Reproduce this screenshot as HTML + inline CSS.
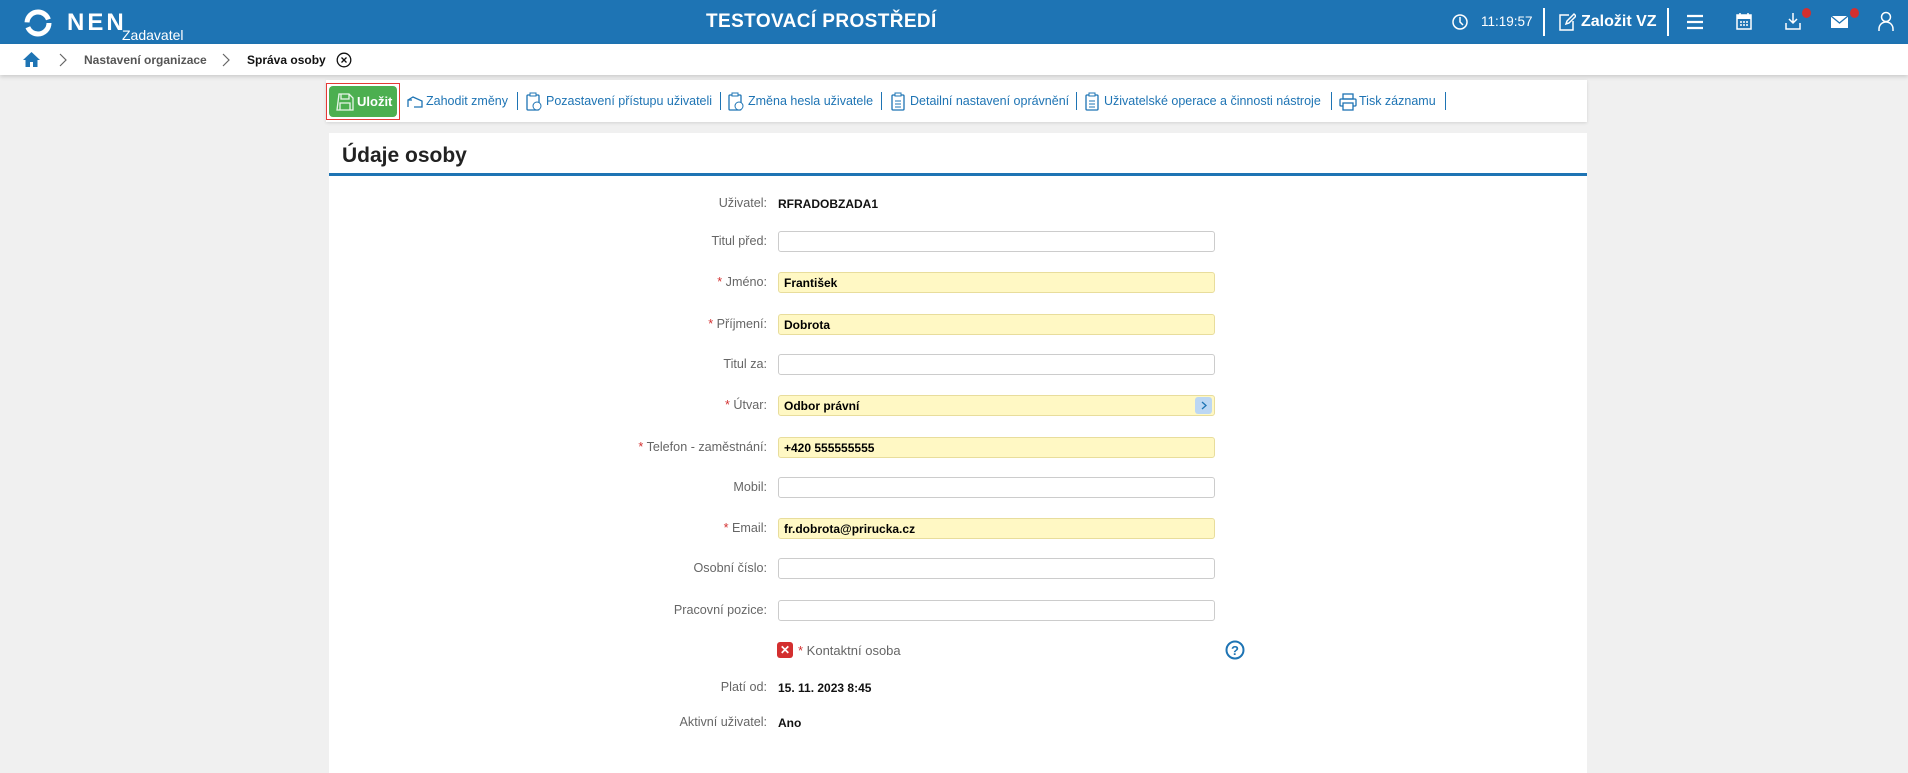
<!DOCTYPE html>
<html><head><meta charset="utf-8"><style>
*{box-sizing:border-box;margin:0;padding:0}
body{width:1908px;height:749px;overflow:hidden;background:#f0f0f0;font-family:"Liberation Sans",sans-serif;position:relative}
.a{position:absolute;white-space:nowrap}
#hdr{position:absolute;left:0;top:0;width:1908px;height:44px;background:#1e74b4}
#bc{position:absolute;left:0;top:44px;width:1908px;height:31px;background:#fff;box-shadow:0 2px 4px rgba(0,0,0,.15)}
#tb{position:absolute;left:326px;top:80px;width:1261px;height:42px;background:#fff;box-shadow:0 1px 3px rgba(0,0,0,.12)}
#card{position:absolute;left:329px;top:133px;width:1258px;height:640px;background:#fff}
.tl{color:#1e74b4;font-size:12.5px;top:94px}
.sep{position:absolute;top:92px;width:1px;height:18px;background:#1e74b4}
.lb{color:#666;font-size:12.6px;text-align:right;right:1141px}
.lb i{color:#d32f2f;font-style:normal}
.in{position:absolute;left:778px;width:437px;height:21px;border:1px solid #ccc;border-radius:3px;background:#fff;font-size:12px;font-weight:bold;padding:3px 5px;color:#000}
.y{background:#fff8c4;border-color:#e8dd9c}
.v{left:778px;font-size:12px;font-weight:bold;color:#111}
</style></head><body>
<div id="hdr"></div>
<svg class="a" style="left:24px;top:9px" width="28" height="28" viewBox="0 0 28 28"><circle cx="14" cy="14" r="11" fill="none" stroke="#fff" stroke-width="5" stroke-dasharray="30 5"/></svg>
<div class="a" style="left:67px;top:9px;color:#fff;font-size:24px;font-weight:bold;letter-spacing:3px">NEN</div>
<div class="a" style="left:122px;top:27px;color:#fff;font-size:14px">Zadavatel</div>
<div class="a" style="left:706px;top:11px;color:#fff;font-size:19px;font-weight:bold;letter-spacing:.4px">TESTOVACÍ PROSTŘEDÍ</div>
<svg class="a" style="left:1451px;top:13px" width="18" height="18"><circle cx="9" cy="9" r="7" fill="none" stroke="#fff" stroke-width="1.5"/><path d="M9 4v5l3 3" stroke="#fff" stroke-width="1.5" fill="none"/></svg>
<div class="a" style="left:1481px;top:14px;color:#fff;font-size:13.5px">11:19:57</div>
<div class="a" style="left:1543px;top:8px;width:2px;height:28px;background:#fff"></div>
<svg class="a" style="left:1558px;top:12px" width="18" height="20"><path d="M11 3H2v15h13V9M8 12l1-3 7-7 2 2-7 7z" stroke="#fff" stroke-width="1.5" fill="none"/></svg>
<div class="a" style="left:1581px;top:13px;color:#fff;font-size:16px;font-weight:bold">Založit VZ</div>
<div class="a" style="left:1667px;top:8px;width:2px;height:28px;background:#fff"></div>
<svg class="a" style="left:1687px;top:14px" width="16" height="16"><path d="M0 2h16M0 8h16M0 14h16" stroke="#fff" stroke-width="2.2"/></svg>
<svg class="a" style="left:1736px;top:12px" width="16" height="18"><rect x="1" y="3" width="14" height="14" fill="none" stroke="#fff" stroke-width="1.5"/><rect x="1" y="3" width="14" height="4" fill="#fff"/><path d="M4 1v4M12 1v4M4 10h2M7 10h2M10 10h2M4 13h2M7 13h2M10 13h2" stroke="#fff" stroke-width="1.5"/></svg>
<svg class="a" style="left:1784px;top:12px" width="18" height="18"><path d="M9 1v9M5 7l4 4 4-4M2 11v6h14v-6" stroke="#fff" stroke-width="1.5" fill="none"/></svg>
<div class="a" style="left:1802px;top:8px;width:9px;height:10px;border-radius:50%;background:#d32f2f"></div>
<svg class="a" style="left:1830px;top:15px" width="19" height="14"><rect x="1" y="1" width="17" height="12" fill="#fff"/><path d="M1 1l8.5 7 8.5-7" stroke="#1e74b4" stroke-width="1.3" fill="none"/></svg>
<div class="a" style="left:1850px;top:8px;width:9px;height:10px;border-radius:50%;background:#d32f2f"></div>
<svg class="a" style="left:1878px;top:11px" width="16" height="20"><circle cx="8" cy="6" r="4.5" fill="none" stroke="#fff" stroke-width="1.5"/><path d="M1 20v-2c0-4 3-7 7-7s7 3 7 7v2" fill="none" stroke="#fff" stroke-width="1.5"/></svg>

<div id="bc"></div>
<svg class="a" style="left:22px;top:51px" width="19" height="17"><path d="M9.5 1L1 9h2.5v7h4.5v-5h3v5h4.5V9H18z" fill="#1e74b4"/></svg>
<svg class="a" style="left:59px;top:53px" width="8" height="14"><path d="M1 1l6 6-6 6" stroke="#666" stroke-width="1.2" fill="none"/></svg>
<div class="a" style="left:84px;top:53px;color:#555;font-size:12px;font-weight:bold">Nastavení organizace</div>
<svg class="a" style="left:222px;top:53px" width="8" height="14"><path d="M1 1l6 6-6 6" stroke="#666" stroke-width="1.2" fill="none"/></svg>
<div class="a" style="left:247px;top:53px;color:#111;font-size:12px;font-weight:bold">Správa osoby</div>
<svg class="a" style="left:336px;top:52px" width="16" height="16"><circle cx="8" cy="8" r="6.8" fill="none" stroke="#111" stroke-width="1.3"/><path d="M5.5 5.5l5 5M10.5 5.5l-5 5" stroke="#111" stroke-width="1.3"/></svg>

<div id="tb"></div>
<div class="a" style="left:326px;top:83px;width:74px;height:37px;border:1px solid #e53935"></div>
<div class="a" style="left:329px;top:86px;width:68px;height:31px;background:#4caf50;border-radius:4px"></div>
<svg class="a" style="left:335px;top:92px" width="20" height="20"><path d="M4 2h10l4 4v12H2zM6 2v5h8V2M5 11h10v7H5z" stroke="#e8f5e9" stroke-width="1.3" fill="none"/></svg>
<div class="a" style="left:357px;top:94px;color:#fff;font-size:13px;font-weight:bold">Uložit</div>
<svg class="a" style="left:406px;top:95px" width="18" height="14"><path d="M2 12V5h4M2 5l5-3 9 4v6H8" stroke="#1e74b4" stroke-width="1.3" fill="none"/></svg>
<div class="a tl" style="left:426px">Zahodit změny</div><div class="sep" style="left:517px"></div>
<svg class="a" style="left:526px;top:92px" width="16" height="20"><rect x="1" y="3" width="12" height="15" rx="1" fill="none" stroke="#1e74b4" stroke-width="1.3"/><rect x="4" y="1" width="6" height="3" fill="#fff" stroke="#1e74b4"/><circle cx="11" cy="14" r="4" fill="#fff" stroke="#1e74b4"/></svg>
<div class="a tl" style="left:546px">Pozastavení přístupu uživateli</div><div class="sep" style="left:720px"></div>
<svg class="a" style="left:728px;top:92px" width="16" height="20"><rect x="1" y="3" width="12" height="15" rx="1" fill="none" stroke="#1e74b4" stroke-width="1.3"/><rect x="4" y="1" width="6" height="3" fill="#fff" stroke="#1e74b4"/><circle cx="11" cy="14" r="4" fill="#fff" stroke="#1e74b4"/></svg>
<div class="a tl" style="left:748px">Změna hesla uživatele</div><div class="sep" style="left:881px"></div>
<svg class="a" style="left:891px;top:92px" width="14" height="20"><rect x="1" y="3" width="12" height="15" rx="1" fill="none" stroke="#1e74b4" stroke-width="1.3"/><rect x="4" y="1" width="6" height="3" fill="#fff" stroke="#1e74b4"/><path d="M4 9h6M4 12h6M4 15h6" stroke="#1e74b4"/></svg>
<div class="a tl" style="left:910px">Detailní nastavení oprávnění</div><div class="sep" style="left:1076px"></div>
<svg class="a" style="left:1085px;top:92px" width="14" height="20"><rect x="1" y="3" width="12" height="15" rx="1" fill="none" stroke="#1e74b4" stroke-width="1.3"/><rect x="4" y="1" width="6" height="3" fill="#fff" stroke="#1e74b4"/><path d="M4 9h6M4 12h6M4 15h6" stroke="#1e74b4"/></svg>
<div class="a tl" style="left:1104px">Uživatelské operace a činnosti nástroje</div><div class="sep" style="left:1331px"></div>
<svg class="a" style="left:1339px;top:93px" width="18" height="18"><rect x="4" y="1" width="10" height="5" fill="none" stroke="#1e74b4" stroke-width="1.3"/><rect x="1" y="6" width="16" height="7" rx="1" fill="none" stroke="#1e74b4" stroke-width="1.3"/><rect x="4" y="10" width="10" height="7" fill="#fff" stroke="#1e74b4" stroke-width="1.3"/></svg>
<div class="a tl" style="left:1359px">Tisk záznamu</div><div class="sep" style="left:1445px"></div>

<div id="card"></div>
<div class="a" style="left:342px;top:144px;font-size:21px;font-weight:bold;color:#222">Údaje osoby</div>
<div class="a" style="left:329px;top:173px;width:1258px;height:3px;background:#1e74b4"></div>

<div class="a lb" style="top:196px">Uživatel:</div><div class="a v" style="top:197px">RFRADOBZADA1</div>
<div class="a lb" style="top:234px">Titul před:</div><div class="in" style="top:231px"></div>
<div class="a lb" style="top:275px"><i>*</i> Jméno:</div><div class="in y" style="top:272px">František</div>
<div class="a lb" style="top:317px"><i>*</i> Příjmení:</div><div class="in y" style="top:314px">Dobrota</div>
<div class="a lb" style="top:357px">Titul za:</div><div class="in" style="top:354px"></div>
<div class="a lb" style="top:398px"><i>*</i> Útvar:</div><div class="in y" style="top:395px">Odbor právní</div>
<svg class="a" style="left:1195px;top:397px" width="17" height="17"><rect width="17" height="17" rx="3" fill="#bcd7f3"/><path d="M7 5l4 3.5-4 3.5" stroke="#1e74b4" stroke-width="1.3" fill="none"/></svg>
<div class="a lb" style="top:440px"><i>*</i> Telefon - zaměstnání:</div><div class="in y" style="top:437px">+420 555555555</div>
<div class="a lb" style="top:480px">Mobil:</div><div class="in" style="top:477px"></div>
<div class="a lb" style="top:521px"><i>*</i> Email:</div><div class="in y" style="top:518px">fr.dobrota@prirucka.cz</div>
<div class="a lb" style="top:561px">Osobní číslo:</div><div class="in" style="top:558px"></div>
<div class="a lb" style="top:603px">Pracovní pozice:</div><div class="in" style="top:600px"></div>
<div class="a" style="left:777px;top:642px;width:16px;height:16px;background:#d32f2f;border-radius:3px;color:#fff;font-size:12px;font-weight:bold;text-align:center;line-height:16px">✕</div>
<div class="a" style="left:798px;top:643px;font-size:13px;color:#666"><span style="color:#d32f2f">*</span> Kontaktní osoba</div>
<svg class="a" style="left:1225px;top:640px" width="20" height="20"><circle cx="10" cy="10" r="8.5" fill="none" stroke="#1e74b4" stroke-width="2"/><text x="10" y="15" font-family="Liberation Sans" font-size="13" font-weight="bold" fill="#1e74b4" text-anchor="middle">?</text></svg>
<div class="a lb" style="top:680px">Platí od:</div><div class="a v" style="top:681px">15. 11. 2023 8:45</div>
<div class="a lb" style="top:715px">Aktivní uživatel:</div><div class="a v" style="top:716px">Ano</div>
</body></html>
